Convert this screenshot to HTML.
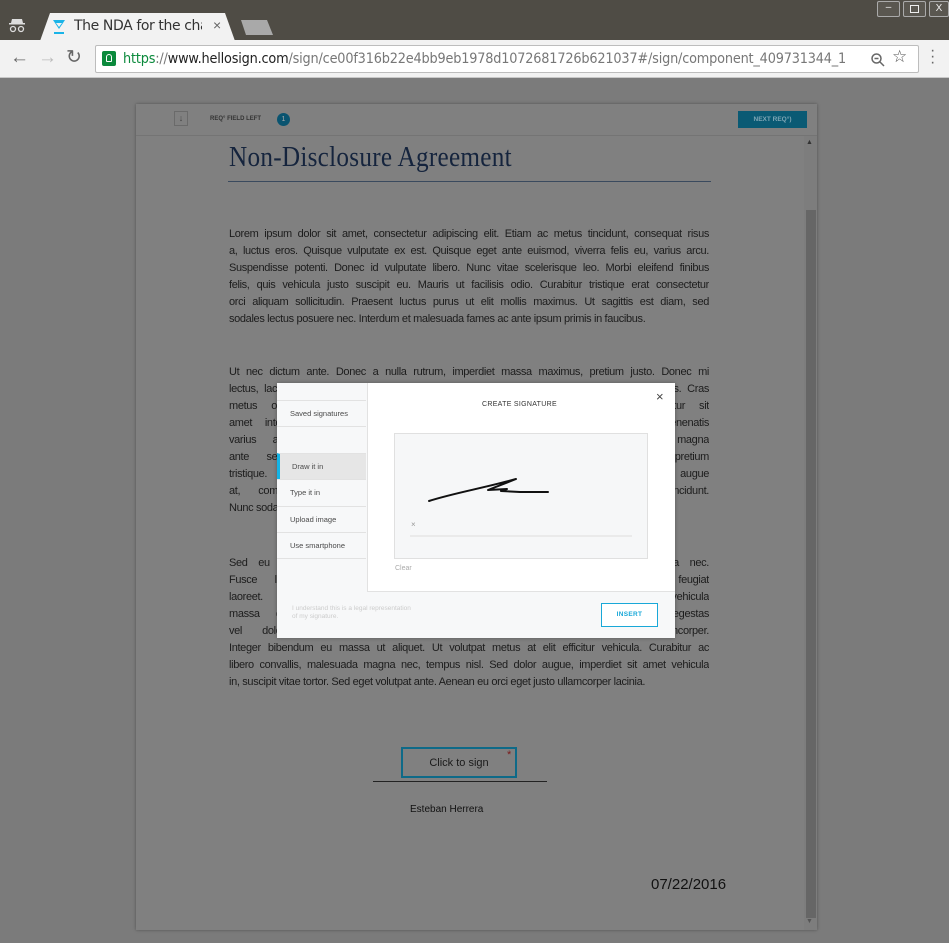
<!DOCTYPE html>
<html><head><meta charset="utf-8">
<style>
*{margin:0;padding:0;box-sizing:border-box}
body{width:949px;height:943px;overflow:hidden;background:#7b7b7b;font-family:"Liberation Sans",sans-serif;position:relative}
.abs{position:absolute}
.top{left:0;top:0;width:949px;height:41px;background:#4f4c45}
.tab{left:40px;top:13px;width:195px;height:28px;background:#f2f2f2;clip-path:polygon(10px 0,185px 0,195px 28px,0 28px)}
.tb{left:0;top:40px;width:949px;height:38px;background:#f2f2f2;border-bottom:1px solid #c8c8c8}
.url{left:95px;top:45px;width:824px;height:28px;background:#fff;border:1px solid #bdbdbd;border-radius:2px}
.page{left:136px;top:104px;width:681px;height:826px;background:#808080;box-shadow:0 0 3px rgba(0,0,0,.35)}
.txt{font-size:11px;line-height:17px;color:#1c1c1c;letter-spacing:-0.35px;width:480px;left:229px}
.txt div{text-align:justify;text-align-last:justify;white-space:nowrap;overflow:hidden;height:17px}
.txt div.l{text-align-last:left}
.modal{left:277px;top:383px;width:398px;height:255px;background:#f7f8f9;box-shadow:0 0 4px rgba(0,0,0,.3)}
.side div{position:absolute;left:0;width:89px;height:27px;font-size:7.5px;color:#4a4a4a;padding-left:13px;line-height:26px;border-top:1px solid #e2e2e2}
</style></head><body>
<div class="abs top"></div>
<svg class="abs" style="left:8px;top:17px" width="18" height="16" viewBox="0 0 18 16"><path d="M4 2h10l1 4H3z" fill="#ddd"/><rect x="1" y="6" width="16" height="1.5" fill="#ddd"/><circle cx="5" cy="12" r="2.5" fill="none" stroke="#ddd" stroke-width="1.3"/><circle cx="13" cy="12" r="2.5" fill="none" stroke="#ddd" stroke-width="1.3"/></svg>
<div class="abs tab"></div>
<svg class="abs" style="left:52px;top:19px" width="14" height="16" viewBox="0 0 14 16"><path d="M1 1h12L7 10z" fill="#1ab4e8"/><path d="M4 4h6L7 8z" fill="#f2f2f2"/><rect x="2" y="13" width="10" height="2" fill="#1ab4e8"/></svg>
<div class="abs" style="left:74px;top:18px;font-size:14px;color:#333;white-space:nowrap;width:128px;overflow:hidden;font-family:'DejaVu Sans',sans-serif;letter-spacing:-0.4px">The NDA for the cha</div>
<div class="abs" style="left:213px;top:17px;font-size:14px;color:#666">×</div>
<div class="abs" style="left:241px;top:20px;width:32px;height:15px;background:#a9a9a9;clip-path:polygon(0 0,26px 0,32px 15px,5px 15px)"></div>
<div class="abs" style="left:877px;top:1px;width:23px;height:16px;border:1px solid #aaa;border-radius:2px;background:#5a5750;color:#eee;font-size:10px;text-align:center;line-height:12px">–</div>
<div class="abs" style="left:903px;top:1px;width:23px;height:16px;border:1px solid #aaa;border-radius:2px;background:#5a5750"><div style="margin:3px auto;width:9px;height:8px;border:1.5px solid #eee"></div></div>
<div class="abs" style="left:929px;top:1px;width:20px;height:16px;border:1px solid #aaa;border-radius:2px;background:#5a5750;color:#eee;font-size:10px;text-align:center;line-height:14px">X</div>
<div class="abs tb"></div>
<div class="abs" style="left:10px;top:47px;font-size:19px;color:#666">←</div>
<div class="abs" style="left:38px;top:47px;font-size:19px;color:#bbb">→</div>
<div class="abs" style="left:66px;top:46px;font-size:19px;color:#666">↻</div>
<div class="abs url"></div>
<div class="abs" style="left:102px;top:51px;width:14px;height:15px;background:#0b8a3c;border-radius:2px"><div style="margin:3px auto 0;width:6px;height:8px;border:1.5px solid #fff;border-radius:3px 3px 1px 1px"></div></div>
<div class="abs" style="left:123px;top:51px;font-size:14px;white-space:nowrap;letter-spacing:-0.2px;color:#777;font-family:'DejaVu Sans',sans-serif;transform:scaleX(0.92);transform-origin:left"><span style="color:#0b8a3c">https</span>://<span style="color:#222">www.hellosign.com</span>/sign/ce00f316b22e4bb9eb1978d1072681726b621037#/sign/component_409731344_1</div>
<svg class="abs" style="left:870px;top:52px" width="16" height="16" viewBox="0 0 16 16"><circle cx="6.5" cy="6.5" r="4.5" fill="none" stroke="#666" stroke-width="1.5"/><path d="M10 10l4 4M4.5 6.5h4" stroke="#666" stroke-width="1.5"/></svg>
<div class="abs" style="left:892px;top:47px;font-size:17px;color:#555">☆</div>
<div class="abs" style="left:930px;top:48px;font-size:16px;color:#666;line-height:6px;width:4px">·<br>·<br>·</div>

<div class="abs page"></div>
<div class="abs" style="left:136px;top:135px;width:681px;height:1px;background:#747474"></div>
<div class="abs" style="left:174px;top:111px;width:14px;height:15px;border:1px solid #6a6a6a;font-size:9px;color:#444;text-align:center;line-height:13px">↓</div>
<div class="abs" style="left:210px;top:116px;font-size:6px;font-weight:bold;color:#333">REQ° FIELD LEFT</div>
<div class="abs" style="left:277px;top:113px;width:13px;height:13px;border-radius:7px;background:#0a5470;color:#aaa;font-size:7px;text-align:center;line-height:13px">1</div>
<div class="abs" style="left:738px;top:111px;width:69px;height:17px;background:#0a5a74;color:#7fa6b5;font-size:6.5px;font-weight:bold;text-align:center;line-height:17px">NEXT REQ°)</div>
<div class="abs" style="left:804px;top:136px;width:13px;height:794px;background:#7d7d7d"></div>
<div class="abs" style="left:806px;top:210px;width:10px;height:708px;background:#666"></div>
<div class="abs" style="left:806px;top:139px;font-size:7px;color:#333">▲</div>
<div class="abs" style="left:806px;top:918px;font-size:7px;color:#555">▼</div>

<div class="abs" style="left:229px;top:142px;font-size:28px;color:#15243d;font-family:'Liberation Serif',serif;letter-spacing:0.3px;transform:scaleX(0.9);transform-origin:left;white-space:nowrap">Non-Disclosure Agreement</div>
<div class="abs" style="left:228px;top:181px;width:483px;height:1px;background:#3a4a5e"></div>

<div class="abs txt" style="top:226px">
<div>Lorem ipsum dolor sit amet, consectetur adipiscing elit. Etiam ac metus tincidunt, consequat risus</div>
<div>a, luctus eros. Quisque vulputate ex est. Quisque eget ante euismod, viverra felis eu, varius arcu.</div>
<div>Suspendisse potenti. Donec id vulputate libero. Nunc vitae scelerisque leo. Morbi eleifend finibus</div>
<div>felis, quis vehicula justo suscipit eu. Mauris ut facilisis odio. Curabitur tristique erat consectetur</div>
<div>orci aliquam sollicitudin. Praesent luctus purus ut elit mollis maximus. Ut sagittis est diam, sed</div>
<div class="l">sodales lectus posuere nec. Interdum et malesuada fames ac ante ipsum primis in faucibus.</div>
</div>
<div class="abs txt" style="top:364px">
<div>Ut nec dictum ante. Donec a nulla rutrum, imperdiet massa maximus, pretium justo. Donec mi</div>
<div>lectus, lacinia vitae luctus in, semper non nunc. Aliquam erat volutpat, vel tellus mollis quis. Cras</div>
<div>metus odio, sodales ut magna vitae, dictum mollis lectus tincidunt. Curabitur sit</div>
<div>amet interdum lorem. Sed non risus sed nunc finibus ornare, sit amet venenatis</div>
<div>varius augue. Integer vel libero vitae purus pretium rutrum in eget magna</div>
<div>ante semper. Vestibulum ante ipsum primis in faucibus orci luctus pretium</div>
<div>tristique. Nam eget ligula ac nulla commodo ullamcorper vel quis augue</div>
<div>at, commodo nunc. Vivamus in porta elit, sed tempus dui in tincidunt.</div>
<div class="l">Nunc sodales est quis lacus molestie.</div>
</div>
<div class="abs txt" style="top:555px">
<div>Sed eu congue mauris. Maecenas ultrices sem et nulla fringilla, ut ornare nulla nec.</div>
<div>Fusce libero sapien, sollicitudin vel tellus at, eleifend euismod ante feugiat</div>
<div>laoreet. Sed placerat commodo orci, et accumsan urna mattis eu vehicula</div>
<div>massa dui. Proin ac nisl sed lectus ultricies aliquet in nisi eget egestas</div>
<div>vel dolor. Mauris pharetra diam ac felis porta, ut dictum ullamcorper.</div>
<div>Integer bibendum eu massa ut aliquet. Ut volutpat metus at elit efficitur vehicula. Curabitur ac</div>
<div>libero convallis, malesuada magna nec, tempus nisl. Sed dolor augue, imperdiet sit amet vehicula</div>
<div class="l">in, suscipit vitae tortor. Sed eget volutpat ante. Aenean eu orci eget justo ullamcorper lacinia.</div>
</div>

<div class="abs" style="left:401px;top:747px;width:116px;height:31px;border:2px solid #0e6a88;font-size:11px;color:#1a1a1a;text-align:center;line-height:28px">Click to sign</div>
<div class="abs" style="left:507px;top:749px;font-size:11px;color:#7a1a1a">*</div>
<div class="abs" style="left:373px;top:781px;width:174px;height:1px;background:#222"></div>
<div class="abs" style="left:410px;top:804px;font-size:10px;color:#111">Esteban Herrera</div>
<div class="abs" style="left:651px;top:876px;font-size:15px;color:#111">07/22/2016</div>

<div class="abs modal">
 <div class="abs" style="left:90px;top:0;width:308px;height:209px;background:#fff;border-left:1px solid #e2e2e2;border-bottom:1px solid #e2e2e2"></div>
 <div class="side">
  <div style="top:17px">Saved signatures</div>
  <div style="top:43px;height:27px"></div>
  <div style="top:70px;background:#e6e6e6;padding-left:12px;border-left:3px solid #14b4e6">Draw it in</div>
  <div style="top:96px">Type it in</div>
  <div style="top:123px">Upload image</div>
  <div style="top:149px;border-bottom:1px solid #e2e2e2">Use smartphone</div>
 </div>
 <div class="abs" style="left:205px;top:18px;font-size:7px;color:#333;letter-spacing:0.3px">CREATE SIGNATURE</div>
 <div class="abs" style="left:379px;top:6px;font-size:13px;color:#444">×</div>
 <div class="abs" style="left:117px;top:50px;width:254px;height:126px;background:#f6f7f8;border:1px solid #e0e0e0"></div>
 <svg class="abs" style="left:117px;top:50px" width="254" height="126"><path d="M35 68 C60 60,90 55,122 46 L94 57 L113 56 L107 58 L126 59 L154 59" fill="none" stroke="#111" stroke-width="2" stroke-linecap="round" stroke-linejoin="round"/><line x1="16" y1="103" x2="238" y2="103" stroke="#ddd"/></svg>
 <div class="abs" style="left:134px;top:137px;font-size:8px;color:#999">×</div>
 <div class="abs" style="left:118px;top:182px;font-size:7px;color:#aaa">Clear</div>
 <div class="abs" style="left:15px;top:222px;font-size:6.5px;color:#ccc;line-height:8px">I understand this is a legal representation<br>of my signature.</div>
 <div class="abs" style="left:324px;top:220px;width:57px;height:24px;border:1px solid #19a8d8;background:#fff;font-size:6.5px;font-weight:bold;color:#19a8d8;text-align:center;line-height:22px;letter-spacing:0.3px">INSERT</div>
</div>
</body></html>
